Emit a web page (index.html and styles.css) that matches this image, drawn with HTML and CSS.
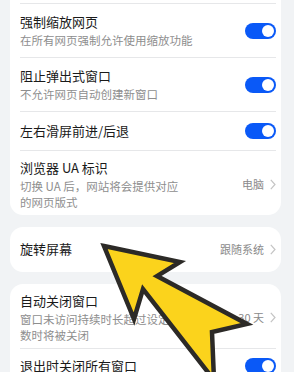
FILE: index.html
```html
<!DOCTYPE html>
<html lang="zh-CN">
<head>
<meta charset="utf-8">
<link rel="stylesheet" href="styles.css">
</head>
<body>
<div class="page">
  <section class="card card-first">
    <div class="row row-two">
      <div class="text">
        <div class="title">强制缩放网页</div>
        <div class="sub">在所有网页强制允许使用缩放功能</div>
      </div>
      <span class="switch"></span>
    </div>
    <div class="row row-two">
      <div class="text">
        <div class="title">阻止弹出式窗口</div>
        <div class="sub">不允许网页自动创建新窗口</div>
      </div>
      <span class="switch"></span>
    </div>
    <div class="row row-one">
      <div class="text">
        <div class="title">左右滑屏前进/后退</div>
      </div>
      <span class="switch"></span>
    </div>
    <div class="row row-three">
      <div class="text text-narrow">
        <div class="title">浏览器 UA 标识</div>
        <div class="sub sub-tight">切换 UA 后，网站将会提供对应的网页版式</div>
      </div>
      <span class="value">电脑<svg class="chev" viewBox="0 0 6 11" width="6" height="11"><polyline points="0.8,0.8 5,5.5 0.8,10.2" fill="none" stroke="#c4c4c4" stroke-width="1.2"/></svg></span>
    </div>
  </section>

  <section class="card">
    <div class="row row-single">
      <div class="text">
        <div class="title">旋转屏幕</div>
      </div>
      <span class="value">跟随系统<svg class="chev" viewBox="0 0 6 11" width="6" height="11"><polyline points="0.8,0.8 5,5.5 0.8,10.2" fill="none" stroke="#c4c4c4" stroke-width="1.2"/></svg></span>
    </div>
  </section>

  <section class="card">
    <div class="row row-three">
      <div class="text text-narrow">
        <div class="title">自动关闭窗口</div>
        <div class="sub sub-tight">窗口未访问持续时长超过设定天数时将被关闭</div>
      </div>
      <span class="value">30 天<svg class="chev" viewBox="0 0 6 11" width="6" height="11"><polyline points="0.8,0.8 5,5.5 0.8,10.2" fill="none" stroke="#c4c4c4" stroke-width="1.2"/></svg></span>
    </div>
    <div class="row row-last">
      <div class="text">
        <div class="title">退出时关闭所有窗口</div>
      </div>
      <span class="switch"></span>
    </div>
  </section>

  <svg class="pointer" viewBox="0 0 294 372" width="294" height="372">
    <polygon points="104,246 180,262 157,276 247,324 212,332 214,380 143,289 134,319" fill="#fbd31c" stroke="#2c2a27" stroke-width="4.5" stroke-linejoin="miter"/>
  </svg>
</div>
</body>
</html>
```

FILE: styles.css
```css
html, body {
  margin: 0;
  padding: 0;
}
body {
  background: #f1f3f5;
  font-family: "Noto Sans CJK SC", "Noto Sans", sans-serif;
  width: 294px;
  height: 372px;
  overflow: hidden;
}
.page {
  position: relative;
  width: 294px;
  height: 372px;
  overflow: hidden;
}
.card {
  background: #ffffff;
  margin: 12px 13px 0 10px;
  padding: 0 5px 0 10px;
  border-radius: 13px;
}
.card-first {
  margin-top: 0;
  padding-top: 3px;
  border-radius: 0 0 13px 13px;
}
.row {
  display: flex;
  align-items: center;
  border-top: 1px solid #e6e7e9;
}
.card .row:first-child {
  border-top: none;
}
.card-first .row:first-child {
  border-top: 1px solid #e6e7e9;
}
.row-two {
  padding: 8px 0 8px;
}
.row-one {
  padding: 9px 0 9px;
}
.row-three {
  padding: 7px 0 5px;
}
.row-single {
  padding: 12px 0 13px;
}
.row-last {
  padding: 7px 0 10px;
}
.text {
  flex: 1;
  min-width: 0;
}
.text-narrow {
  margin-right: 54px;
}
.title {
  font-size: 13px;
  line-height: 20px;
  color: #1a1a1a;
}
.sub {
  font-size: 11.5px;
  line-height: 17px;
  color: #8e8e8e;
}
.sub-tight {
  line-height: 16px;
}
.switch {
  position: relative;
  flex: none;
  width: 31px;
  height: 16px;
  border-radius: 8px;
  background: #0a59f7;
}
.switch::after {
  content: "";
  position: absolute;
  right: 2px;
  top: 2px;
  width: 12px;
  height: 12px;
  border-radius: 50%;
  background: #ffffff;
}
.value {
  flex: none;
  display: flex;
  align-items: center;
  gap: 6px;
  font-size: 11px;
  line-height: 16px;
  color: #8a8a8a;
}
.chev {
  display: block;
}
.pointer {
  position: absolute;
  left: 0;
  top: 0;
  pointer-events: none;
}
```
